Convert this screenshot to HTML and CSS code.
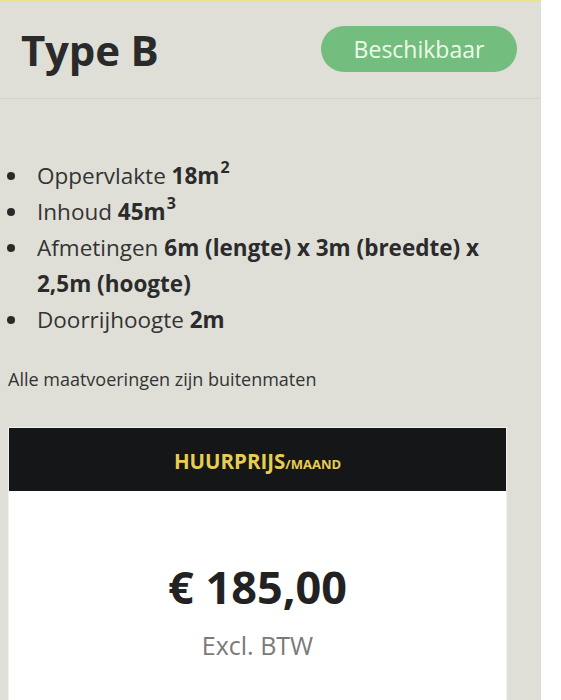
FILE: index.html
```html
<!DOCTYPE html>
<html lang="nl">
<head>
<meta charset="utf-8">
<title>Type B</title>
<link rel="stylesheet" href="styles.css">
</head>
<body>
<div class="page">
  <section class="panel">
    <header class="head">
      <h1 class="title">Type B</h1>
      <span class="badge">Beschikbaar</span>
    </header>
    <ul class="specs">
      <li><span class="txt">Oppervlakte <b>18m<sup>2</sup></b></span></li>
      <li><span class="txt">Inhoud <b>45m<sup>3</sup></b></span></li>
      <li><span class="txt">Afmetingen <b>6m (lengte) x 3m (breedte) x 2,5m (hoogte)</b></span></li>
      <li><span class="txt">Doorrijhoogte <b>2m</b></span></li>
    </ul>
    <p class="note">Alle maatvoeringen zijn buitenmaten</p>
    <div class="price-box">
      <div class="price-head"><span class="ph-main">HUURPRIJS</span><span class="ph-sub">/MAAND</span></div>
      <div class="price-body">
        <div class="price">€ 185,00</div>
        <div class="vat">Excl. BTW</div>
      </div>
    </div>
  </section>
  <div class="side"></div>
</div>
</body>
</html>
```
FILE: styles.css
```css
html, body {
  margin: 0;
  padding: 0;
  background: #ffffff;
}
body {
  font-family: "Open Sans", "DejaVu Sans", sans-serif;
  color: #333333;
}
.page {
  display: flex;
  width: 561px;
  height: 700px;
  overflow: hidden;
}
.panel {
  width: 541px;
  flex: none;
  background: #dfdfd8;
  border-top: 2px solid #ece08f;
  box-sizing: border-box;
}
.side {
  flex: 1;
  background: #ffffff;
}
.head {
  display: flex;
  justify-content: space-between;
  align-items: center;
  height: 96px;
  padding: 0 24px 0 21px;
  border-bottom: 1px solid #d2d2ca;
}
.title {
  margin: 0;
  font-size: 42px;
  font-weight: 700;
  color: #2a2a2a;
  letter-spacing: -0.2px;
  line-height: 1;
}
.badge {
  display: flex;
  align-items: center;
  justify-content: center;
  width: 196px;
  height: 46px;
  box-sizing: border-box;
  border-radius: 23px;
  background: #73bd7f;
  color: #eefbe8;
  font-size: 23px;
  font-weight: 500;
  margin-top: -2px;
}
.specs {
  list-style: none;
  margin: 59px 0 0;
  padding: 0 22px 0 7px;
  font-size: 22.5px;
  line-height: 36px;
  color: #333333;
}
.specs li {
  display: flex;
  align-items: flex-start;
}
.specs li::before {
  content: "";
  flex: none;
  width: 8px;
  height: 8px;
  border-radius: 50%;
  background: #2a2a2a;
  margin: 14px 22px 0 0;
}
.txt {
  flex: 1;
  min-width: 0;
}
.specs b {
  font-weight: 700;
  color: #2b2b2b;
}
.specs sup {
  font-size: 16px;
  line-height: 0;
  vertical-align: 11px;
  margin-left: 1px;
}
.note {
  margin: 28px 0 0 8px;
  font-size: 18px;
  line-height: 26px;
  color: #333333;
}
.price-box {
  margin: 35px 34px 0 8px;
  border: 1px solid #f1f1ec;
  border-bottom: none;
  background: #ffffff;
}
.price-head {
  display: flex;
  justify-content: center;
  align-items: baseline;
  height: 63px;
  line-height: 66px;
  background: #141618;
  color: #e6cd53;
  font-weight: 700;
}
.ph-main {
  font-size: 20.5px;
}
.ph-sub {
  font-size: 13px;
}
.price-body {
  padding: 66px 0 60px;
  text-align: center;
}
.price {
  font-size: 45px;
  font-weight: 700;
  line-height: 60px;
  color: #222222;
}
.vat {
  margin-top: 12px;
  font-size: 25px;
  line-height: 32px;
  color: #7a7a7a;
}
```
